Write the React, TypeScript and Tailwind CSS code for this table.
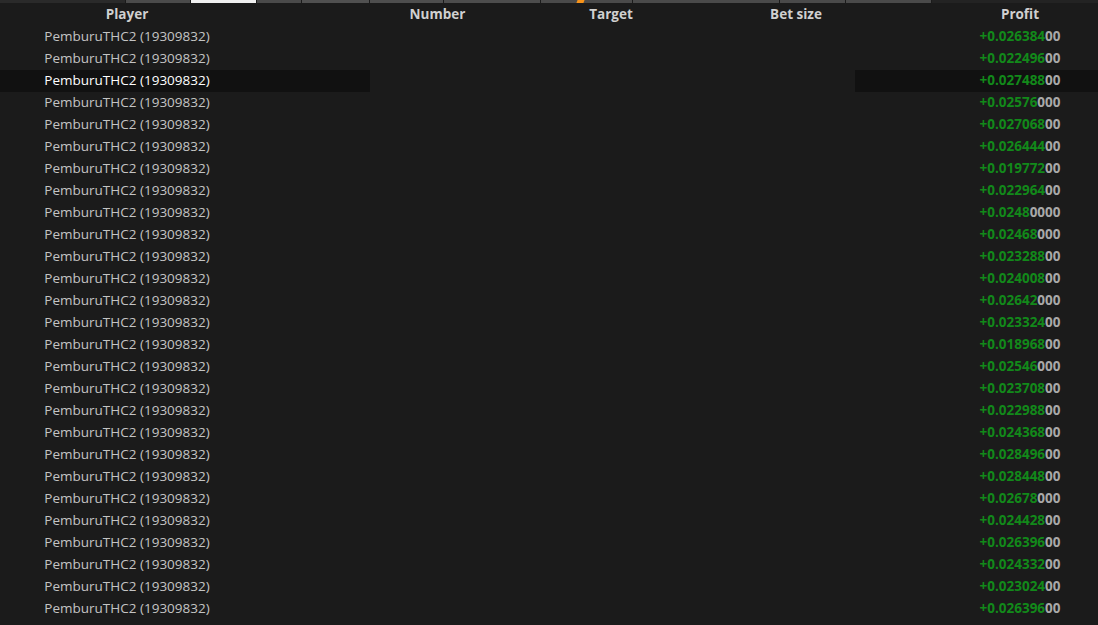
import React from 'react';

type Bet = { green: string; gray: string };

const profits: Bet[] = [
  { green: '+0.026384', gray: '00' },
  { green: '+0.022496', gray: '00' },
  { green: '+0.027488', gray: '00' },
  { green: '+0.02576', gray: '000' },
  { green: '+0.027068', gray: '00' },
  { green: '+0.026444', gray: '00' },
  { green: '+0.019772', gray: '00' },
  { green: '+0.022964', gray: '00' },
  { green: '+0.0248', gray: '0000' },
  { green: '+0.02468', gray: '000' },
  { green: '+0.023288', gray: '00' },
  { green: '+0.024008', gray: '00' },
  { green: '+0.02642', gray: '000' },
  { green: '+0.023324', gray: '00' },
  { green: '+0.018968', gray: '00' },
  { green: '+0.02546', gray: '000' },
  { green: '+0.023708', gray: '00' },
  { green: '+0.022988', gray: '00' },
  { green: '+0.024368', gray: '00' },
  { green: '+0.028496', gray: '00' },
  { green: '+0.028448', gray: '00' },
  { green: '+0.02678', gray: '000' },
  { green: '+0.024428', gray: '00' },
  { green: '+0.026396', gray: '00' },
  { green: '+0.024332', gray: '00' },
  { green: '+0.023024', gray: '00' },
  { green: '+0.026396', gray: '00' },
  { green: '+0.025728', gray: '00' },
];

const cols = 'grid grid-cols-[254px_116px_135px_212px_138px_87px_156px]';

const TopStrip = () => (
  <div className="flex h-[4px] gap-px bg-[#1b1b1b] pb-px">
    <div className="w-[125px] bg-[#2a2a2a]" />
    <div className="w-[64px] bg-[#4b4b4b]" />
    <div className="w-[65px] bg-[#f0f0f0]" />
    <div className="w-[44px] bg-[#4a4a4a]" />
    <div className="w-[67px] bg-[#505050]" />
    <div className="w-[73px] bg-[#4e4e4e]" />
    <div className="w-[96px] bg-[#4d4d4d]" />
    <div className="relative w-[91px] bg-[#4a4a4a]">
      <div className="absolute left-[36px] top-0 h-full w-[7px] skew-x-[-20deg] bg-[#f7931a]" />
    </div>
    <div className="w-[146px] bg-[#4a4a4a]" />
    <div className="w-[65px] bg-[#4a4a4a]" />
    <div className="w-[85px] bg-[#4a4a4a]" />
    <div className="flex-1 bg-[#232323]" />
  </div>
);

export default function App() {
  return (
    <div
      className="h-[625px] w-[1098px] overflow-hidden bg-[#1b1b1b] text-[13.5px]"
      style={{ fontFamily: '"Open Sans", "Liberation Sans", sans-serif' }}
    >
      <TopStrip />
      <div className={`${cols} h-[22px] items-center pb-px font-bold text-[#d0d0d0]`}>
        <div className="text-center">Player</div>
        <div />
        <div className="text-center">Number</div>
        <div className="text-center">Target</div>
        <div className="pl-5 text-center">Bet size</div>
        <div />
        <div className="text-center">Profit</div>
      </div>
      {profits.map((p, i) => {
        const active = i === 2;
        const hl = active ? 'bg-[#111111]' : '';
        return (
          <div key={i} className={`${cols} h-[22px] items-center`}>
            <div className={`flex h-full items-center justify-center pb-0.5 ${hl} ${active ? 'text-white' : 'text-[#c4c4c4]'}`}>
              PemburuTHC2 (19309832)
            </div>
            <div className={`h-full ${hl}`} />
            <div />
            <div />
            <div />
            <div className={`h-full ${hl}`} />
            <div className={`flex h-full items-center justify-center pb-0.5 font-bold ${hl}`}>
              <span className="text-[#12891a]">{p.green}</span>
              <span className="text-[#a9a9a9]">{p.gray}</span>
            </div>
          </div>
        );
      })}
    </div>
  );
}
